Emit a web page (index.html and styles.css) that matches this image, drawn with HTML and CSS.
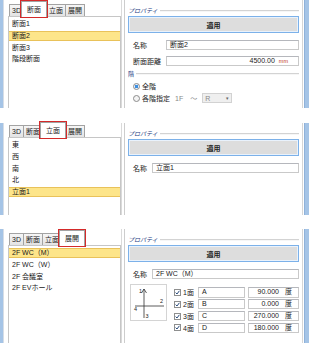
FILE: index.html
```html
<!DOCTYPE html>
<html lang="ja">
<head>
    <meta charset="UTF-8">
    <title>断面・立面・展開 プロパティ</title>
    <link rel="stylesheet" href="styles.css">
</head>
<body>
    <!-- 断面 -->
    <div class="panel panel-section">
        <div class="edge"></div>
        <div class="left-pane">
            <div class="tabs">
                <span class="tab">3D</span>
                <span class="tab active marked">断面</span>
                <span class="tab">立面</span>
                <span class="tab">展開</span>
            </div>
            <ul class="list">
                <li>断面1</li>
                <li class="selected">断面2</li>
                <li>断面3</li>
                <li>階段断面</li>
            </ul>
        </div>
        <div class="splitter"></div>
        <div class="props">
            <div class="group-title"><span>プロパティ</span></div>
            <button class="apply">適用</button>
            <div class="fields">
                <label>名称</label>
                <div class="input">断面2</div>
                <label>断面距離</label>
                <div class="input num">4500.00<span class="unit">mm</span></div>
            </div>
            <div class="group-title floor-title"><span>階</span></div>
            <div class="radio-row">
                <span class="radio checked"></span>全階
            </div>
            <div class="radio-row">
                <span class="radio"></span>各階指定
                <span class="muted from">1F</span>
                <span class="muted tilde">〜</span>
                <span class="select">R<span class="caret">▾</span></span>
            </div>
        </div>
        <div class="rule"></div>
        <div class="edge edge-right"></div>
    </div>

    <!-- 立面 -->
    <div class="panel panel-elevation">
        <div class="edge"></div>
        <div class="left-pane">
            <div class="tabs">
                <span class="tab">3D</span>
                <span class="tab">断面</span>
                <span class="tab active marked">立面</span>
                <span class="tab">展開</span>
            </div>
            <ul class="list">
                <li>東</li>
                <li>西</li>
                <li>南</li>
                <li>北</li>
                <li class="selected">立面1</li>
            </ul>
        </div>
        <div class="splitter"></div>
        <div class="props">
            <div class="group-title"><span>プロパティ</span></div>
            <button class="apply">適用</button>
            <div class="fields">
                <label>名称</label>
                <div class="input">立面1</div>
            </div>
        </div>
        <div class="rule"></div>
        <div class="edge edge-right"></div>
    </div>

    <!-- 展開 -->
    <div class="panel panel-develop">
        <div class="edge"></div>
        <div class="left-pane">
            <div class="tabs">
                <span class="tab">3D</span>
                <span class="tab">断面</span>
                <span class="tab">立面</span>
                <span class="tab active marked">展開</span>
            </div>
            <ul class="list">
                <li class="selected">2F WC（M）</li>
                <li>2F WC（W）</li>
                <li>2F 会議室</li>
                <li>2F EVホール</li>
            </ul>
        </div>
        <div class="splitter"></div>
        <div class="props">
            <div class="group-title"><span>プロパティ</span></div>
            <button class="apply">適用</button>
            <div class="fields">
                <label>名称</label>
                <div class="input">2F WC（M）</div>
            </div>
            <div class="directions">
                <div class="compass">
                    <svg width="37" height="37" viewBox="0 0 37 37">
                        <line x1="14" y1="5" x2="14" y2="34" stroke="#333" stroke-width="0.8"/>
                        <line x1="5" y1="22" x2="34" y2="22" stroke="#333" stroke-width="0.8"/>
                        <polyline points="11.5,9 14,5 16.5,9" fill="none" stroke="#333" stroke-width="0.8"/>
                        <text x="9" y="9" class="compass-num">1</text>
                        <text x="30" y="19" class="compass-num">2</text>
                        <text x="15.5" y="34" class="compass-num">3</text>
                        <text x="4" y="27" class="compass-num">4</text>
                    </svg>
                </div>
                <div class="dir-rows">
                    <div class="dir-row">
                        <span class="check"><svg width="5" height="5" viewBox="0 0 5 5"><polyline points="0.6,2.6 2,4 4.4,0.8" fill="none" stroke="#2a4c7c" stroke-width="1"/></svg></span>
                        <span class="dir-label">1面</span>
                        <div class="input dir-name">A</div>
                        <div class="input num angle">90.000<span class="deg">度</span></div>
                    </div>
                    <div class="dir-row">
                        <span class="check"><svg width="5" height="5" viewBox="0 0 5 5"><polyline points="0.6,2.6 2,4 4.4,0.8" fill="none" stroke="#2a4c7c" stroke-width="1"/></svg></span>
                        <span class="dir-label">2面</span>
                        <div class="input dir-name">B</div>
                        <div class="input num angle">0.000<span class="deg">度</span></div>
                    </div>
                    <div class="dir-row">
                        <span class="check"><svg width="5" height="5" viewBox="0 0 5 5"><polyline points="0.6,2.6 2,4 4.4,0.8" fill="none" stroke="#2a4c7c" stroke-width="1"/></svg></span>
                        <span class="dir-label">3面</span>
                        <div class="input dir-name">C</div>
                        <div class="input num angle">270.000<span class="deg">度</span></div>
                    </div>
                    <div class="dir-row">
                        <span class="check"><svg width="5" height="5" viewBox="0 0 5 5"><polyline points="0.6,2.6 2,4 4.4,0.8" fill="none" stroke="#2a4c7c" stroke-width="1"/></svg></span>
                        <span class="dir-label">4面</span>
                        <div class="input dir-name">D</div>
                        <div class="input num angle">180.000<span class="deg">度</span></div>
                    </div>
                </div>
            </div>
        </div>
        <div class="rule"></div>
        <div class="edge edge-right"></div>
    </div>
</body>
</html>
```

FILE: styles.css
```css
* {
    margin: 0;
    padding: 0;
    box-sizing: border-box;
}

body {
    width: 310px;
    background: #fff;
    font-family: "Liberation Sans", "Noto Sans CJK JP", sans-serif;
    font-size: 7px;
    color: #1a1a1a;
}

/* Panels */
.panel {
    display: flex;
}

.panel-section {
    height: 108px;
}

.panel-elevation {
    height: 92px;
    margin-top: 15px;
}

.panel-develop {
    height: 114px;
    margin-top: 14px;
}

.edge {
    width: 4px;
    background: #a5c4e6;
    border-right: 1px solid #d6dde6;
}

.edge-right {
    width: 5px;
    margin-left: 1px;
    border-right: none;
    border-left: 1px solid #8fb2da;
}

.rule {
    width: 1px;
    background: #d6d6d6;
}

/* Left pane: tabs + list */
.left-pane {
    width: 117px;
    padding-left: 4px;
    display: flex;
    flex-direction: column;
}

.tabs {
    height: 16px;
    display: flex;
    align-items: flex-end;
    padding-left: 1px;
}

.panel-elevation .tabs {
    height: 14px;
}

.tab {
    height: 12px;
    padding: 0 2px;
    margin-right: -1px;
    border: 1px solid #a3a3a3;
    border-bottom: none;
    background: linear-gradient(#f6f6f6, #e3e3e3);
    line-height: 11px;
    color: #222;
}

.tab.active {
    position: relative;
    z-index: 1;
    height: 16px;
    margin: 0 -1px -1px -2px;
    padding: 0 5px;
    background: #fff;
    line-height: 15px;
}

.tab.marked {
    outline: 1.5px solid #d42a2a;
    outline-offset: 0.5px;
}

.list {
    flex: 1;
    list-style: none;
    border: 1px solid #c6c6c6;
    border-bottom: none;
    padding-top: 2px;
}

.list li {
    height: 10px;
    line-height: 10px;
    margin-bottom: 1.8px;
    padding-left: 3px;
}

.list li.selected {
    background: #fde58a;
    border-top: 1px solid #e9c25a;
    border-bottom: 1px solid #e9c25a;
    line-height: 8px;
}

.splitter {
    width: 4px;
    border-left: 1px solid #dadada;
    border-right: 1px solid #cdcdcd;
}

/* Right pane: properties */
.props {
    width: 177px;
    padding: 6px 3px 0 3px;
    display: flex;
    flex-direction: column;
}

.group-title {
    height: 9px;
    display: flex;
    align-items: center;
    font-size: 6px;
    font-style: italic;
    color: #243c82;
}

.group-title::after {
    content: "";
    flex: 1;
    margin-left: 2px;
    border-top: 1px solid #d3d3d3;
    border-bottom: 1px solid #f6f6f6;
}

.apply {
    height: 17px;
    margin-top: 1px;
    border: 1px solid #7cb1e9;
    box-shadow: inset 0 0 0 1px #e9f2fc;
    background: #dddddd;
    font-family: inherit;
    font-size: 7px;
    font-weight: bold;
    color: #222;
}

.fields {
    display: grid;
    grid-template-columns: auto 1fr;
    column-gap: 5px;
    row-gap: 6px;
    margin-top: 7px;
    padding-left: 5px;
    align-items: center;
}

.input {
    height: 10px;
    border: 1px solid #c9c9c9;
    border-top-color: #b5b7bc;
    padding: 0 3px;
    line-height: 8px;
    background: #fff;
    white-space: nowrap;
    overflow: hidden;
}

.input.num {
    display: flex;
    justify-content: flex-end;
    align-items: center;
}

.unit {
    margin-left: 4px;
    margin-right: 7px;
    font-size: 5.5px;
    color: #c0392b;
}

.floor-title {
    margin-top: 3px;
    font-style: normal;
}

.radio-row {
    height: 10px;
    margin-top: 2px;
    padding-left: 5px;
    display: flex;
    align-items: center;
}

.floor-title + .radio-row {
    margin-top: 3px;
}

.radio {
    width: 7px;
    height: 7px;
    margin-right: 2px;
    border-radius: 50%;
    border: 1px solid #8c8c8c;
    background: #f4f4f4;
}

.radio.checked {
    background: radial-gradient(circle, #3d8fe0 0 45%, #e8f1fb 55%);
}

.muted {
    color: #888;
}

.from {
    margin-left: 5px;
}

.tilde {
    margin-left: 7px;
}

.select {
    width: 30px;
    height: 10px;
    margin-left: 5px;
    padding-left: 2px;
    display: flex;
    align-items: center;
    justify-content: space-between;
    border: 1px solid #d2d2d2;
    background: #efefef;
    color: #8a8a8a;
}

.caret {
    margin-right: 2px;
    font-size: 5px;
    color: #666;
}

/* Direction settings */
.directions {
    display: flex;
    margin-top: 5px;
    padding-left: 2px;
}

.compass {
    width: 37px;
    height: 37px;
    border: 1px solid #d4d4d4;
    background: #fff;
}

.compass svg {
    display: block;
    margin: -1px;
}

.compass-num {
    font-family: "Liberation Sans", sans-serif;
    font-size: 5.5px;
    fill: #222;
}

.dir-rows {
    margin-left: 7px;
    margin-top: 3px;
}

.dir-row {
    height: 10.5px;
    margin-bottom: 1.4px;
    display: flex;
    align-items: center;
}

.check {
    width: 7px;
    height: 7px;
    border: 1px solid #8e8f8f;
    background: #fff;
    display: flex;
    align-items: center;
    justify-content: center;
}

.check svg {
    display: block;
}

.dir-label {
    width: 14px;
    margin-left: 2px;
}

.dir-name {
    width: 47px;
    height: 10.5px;
    margin-left: 1px;
}

.angle {
    width: 51px;
    height: 10.5px;
    margin-left: 3px;
    padding-right: 6px;
}

.deg {
    margin-left: 6px;
}
```
